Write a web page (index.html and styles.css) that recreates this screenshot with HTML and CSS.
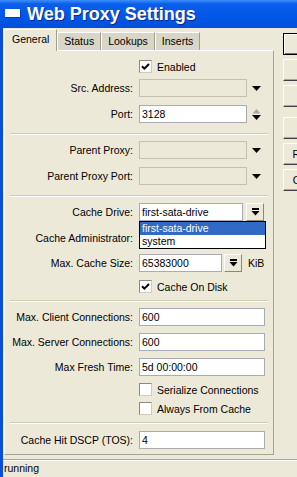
FILE: index.html
```html
<!DOCTYPE html>
<html lang="en">
<head>
  <meta charset="UTF-8" />
  <title>Web Proxy Settings</title>
  <link rel="stylesheet" href="styles.css">
</head>
<body>

  <div class="window">
    <div class="titlebar">
      <span class="app-icon"></span>
      <span class="title">Web Proxy Settings</span>
    </div>

    <div class="frame">
      <div class="main">
        <div class="settings">
          <div class="tabs">
            <div class="tab active">General</div>
            <div class="tab">Status</div>
            <div class="tab">Lookups</div>
            <div class="tab">Inserts</div>
          </div>

          <div class="panel">
            <div class="row check-row">
              <span class="label"></span>
              <label class="check"><span class="box"><svg width="9" height="9" viewBox="0 0 9 9"><path d="M1 4.2 L3.4 6.6 L8 2" fill="none" stroke="#000" stroke-width="2"/></svg></span>Enabled</label>
            </div>
            <div class="row tight">
              <span class="label">Src. Address:</span>
              <div class="field">
                <input class="input short" disabled>
                <span class="drop"><svg width="9" height="5" viewBox="0 0 9 5"><polygon points="0,0 9,0 4.5,5" fill="#000"/></svg></span>
              </div>
            </div>
            <div class="row loose">
              <span class="label">Port:</span>
              <div class="field">
                <input class="input short" value="3128">
                <span class="drop"><svg width="9" height="13" viewBox="0 0 9 13"><polygon points="0.5,5.5 8.5,5.5 4.5,1" fill="#A8A79E"/><polygon points="0,7 9,7 4.5,12" fill="#000"/></svg></span>
              </div>
            </div>

            <div class="sep"></div>

            <div class="row tight">
              <span class="label">Parent Proxy:</span>
              <div class="field">
                <input class="input short" disabled>
                <span class="drop"><svg width="9" height="5" viewBox="0 0 9 5"><polygon points="0,0 9,0 4.5,5" fill="#000"/></svg></span>
              </div>
            </div>
            <div class="row loose">
              <span class="label">Parent Proxy Port:</span>
              <div class="field">
                <input class="input short" disabled>
                <span class="drop"><svg width="9" height="5" viewBox="0 0 9 5"><polygon points="0,0 9,0 4.5,5" fill="#000"/></svg></span>
              </div>
            </div>

            <div class="sep"></div>

            <div class="row tight">
              <span class="label">Cache Drive:</span>
              <div class="field">
                <input class="input drive" value="first-sata-drive">
                <span class="pick"><svg width="9" height="8" viewBox="0 0 9 8"><rect x="1" y="0" width="7" height="2" fill="#000"/><polygon points="0.5,3 8.5,3 4.5,7.5" fill="#000"/></svg></span>
                <div class="list">
                  <div class="opt sel">first-sata-drive</div>
                  <div class="opt">system</div>
                </div>
              </div>
            </div>
            <div class="row loose">
              <span class="label">Cache Administrator:</span>
              <div class="field">
                <input class="input" value="webmaster">
              </div>
            </div>
            <div class="row">
              <span class="label">Max. Cache Size:</span>
              <div class="field">
                <input class="input size" value="65383000">
                <span class="pick"><svg width="9" height="8" viewBox="0 0 9 8"><rect x="1" y="0" width="7" height="2" fill="#000"/><polygon points="0.5,3 8.5,3 4.5,7.5" fill="#000"/></svg></span>
                <span class="unit">KiB</span>
              </div>
            </div>
            <div class="row check-row loose">
              <span class="label"></span>
              <label class="check"><span class="box"><svg width="9" height="9" viewBox="0 0 9 9"><path d="M1 4.2 L3.4 6.6 L8 2" fill="none" stroke="#000" stroke-width="2"/></svg></span>Cache On Disk</label>
            </div>

            <div class="sep near"></div>

            <div class="row tight">
              <span class="label">Max. Client Connections:</span>
              <div class="field"><input class="input" value="600"></div>
            </div>
            <div class="row">
              <span class="label">Max. Server Connections:</span>
              <div class="field"><input class="input" value="600"></div>
            </div>
            <div class="row">
              <span class="label">Max Fresh Time:</span>
              <div class="field"><input class="input" value="5d 00:00:00"></div>
            </div>
            <div class="row check-row">
              <span class="label"></span>
              <label class="check"><span class="box"></span>Serialize Connections</label>
            </div>
            <div class="row check-row tight">
              <span class="label"></span>
              <label class="check"><span class="box"></span>Always From Cache</label>
            </div>

            <div class="sep near"></div>

            <div class="row">
              <span class="label">Cache Hit DSCP (TOS):</span>
              <div class="field"><input class="input" value="4"></div>
            </div>
          </div>
        </div>

        <div class="actions">
          <button class="btn default">OK</button>
          <button class="btn">Cancel</button>
          <button class="btn">Apply</button>
          <button class="btn group">Access</button>
          <button class="btn">Reset HTML</button>
          <button class="btn">Clear Cache</button>
        </div>
      </div>

      <div class="statusbar">running</div>
    </div>
  </div>

</body>
</html>
```

FILE: styles.css
```css
body {
  margin: 0;
  font-family: "Liberation Sans", Arial, sans-serif;
  font-size: 10.5px;
  color: #000;
  background: #ECE9D8;
}

.window {
  width: 297px;
  height: 477px;
  overflow: hidden;
}

.titlebar {
  height: 28px;
  display: flex;
  align-items: center;
  background: linear-gradient(#3D8EFB, #0B5EEB 4px, #0057E6 60%, #0050DA);
}

.app-icon {
  width: 15px;
  height: 8px;
  margin: -2px 7px 0 5px;
  background: #fff;
  box-shadow: 1px 1px 0 #0A3CA6;
}

.title {
  color: #fff;
  font-size: 18px;
  font-weight: bold;
  text-shadow: 1px 1px 0 #0A2A8C;
}

.frame {
  height: 449px;
  border-left: 3px solid #0B4FD8;
  display: flex;
  flex-direction: column;
}

.main {
  flex: 1;
  display: flex;
}

.settings {
  width: 271px;
  flex-shrink: 0;
}

.tabs {
  height: 22px;
  margin-left: 1px;
  display: flex;
  align-items: flex-end;
}

.tab {
  height: 18px;
  box-sizing: border-box;
  padding: 0 6px;
  line-height: 17px;
  background: #DAD6C7;
  border: 1px solid;
  border-color: #fff #A09D8C transparent #fff;
  border-bottom: none;
}

.tab.active {
  height: 22px;
  padding: 0 7px;
  line-height: 19px;
  background: #ECE9D8;
  margin-bottom: -1px;
  position: relative;
  z-index: 1;
}

.panel {
  margin-left: 1px;
  width: 270px;
  box-sizing: border-box;
  border: 1px solid;
  border-color: #fff #A7A492 #A7A492 #fff;
  padding: 9px 0 5px;
}

.row {
  display: grid;
  grid-template-columns: 128px 126px;
  column-gap: 6px;
  align-items: center;
  margin-top: 7px;
}

.row:first-child {
  margin-top: 0;
}

.row.tight {
  margin-top: 6px;
}

.row.loose {
  margin-top: 8px;
}

.check-row {
  height: 13px;
}

.label {
  text-align: right;
  white-space: nowrap;
}

.field {
  height: 18px;
  display: flex;
  align-items: center;
  position: relative;
}

.input {
  box-sizing: border-box;
  width: 100%;
  height: 18px;
  margin: 0;
  padding: 0 2px;
  border: 1px solid #A5ACB2;
  background: #fff;
  font: inherit;
  color: #000;
  outline: none;
}

.input:disabled {
  background: #ECE9D8;
  border-color: #C3C0B2;
}

.input.short {
  width: 108px;
}

.input.drive {
  width: 104px;
  margin-right: 3px;
}

.input.size {
  width: 83px;
  margin-right: 2px;
}

.drop {
  width: 18px;
  display: flex;
  justify-content: center;
}

.pick {
  box-sizing: border-box;
  width: 18px;
  height: 18px;
  flex-shrink: 0;
  border: 1px solid;
  border-color: #fff #8B887A #8B887A #fff;
  background: #ECE9D8;
  display: flex;
  align-items: center;
  justify-content: center;
}

.unit {
  margin-left: 6px;
}

.list {
  position: absolute;
  top: 18px;
  left: 0;
  width: 127px;
  box-sizing: border-box;
  border: 1px solid #000;
  background: #fff;
  z-index: 2;
}

.opt {
  height: 13px;
  line-height: 13px;
  padding-left: 2px;
}

.opt.sel {
  background: #316AC5;
  color: #fff;
}

.check {
  display: flex;
  align-items: center;
  gap: 5px;
  white-space: nowrap;
}

.box {
  width: 13px;
  height: 13px;
  box-sizing: border-box;
  border: 1px solid;
  border-color: #8D8B80 #CFCCBF #CFCCBF #8D8B80;
  background: #fff;
  display: flex;
  align-items: center;
  justify-content: center;
}

.sep {
  margin: 10px 5px 0;
  border-top: 1px solid #D0CCBC;
  border-bottom: 1px solid #fff;
}

.sep.near {
  margin-top: 7px;
}

.actions {
  flex-shrink: 0;
  margin: 5px 0 0 9px;
  display: flex;
  flex-direction: column;
  gap: 4px;
}

.btn {
  width: 78px;
  height: 22px;
  padding: 0;
  font: inherit;
  color: #000;
  background: #ECE9D8;
  border: 1px solid;
  border-color: #fff #404040 #404040 #fff;
  box-shadow: inset -1px -1px 0 #ACA899;
}

.btn.default {
  border-color: #000;
  box-shadow: inset 1px 1px 0 #fff, inset -1px -1px 0 #716F64;
}

.btn.group {
  margin-top: 6px;
}

.statusbar {
  height: 17px;
  padding-left: 1px;
  line-height: 17px;
  border-top: 1px solid #ACA899;
  box-shadow: inset 0 1px 0 #fff;
}
```
